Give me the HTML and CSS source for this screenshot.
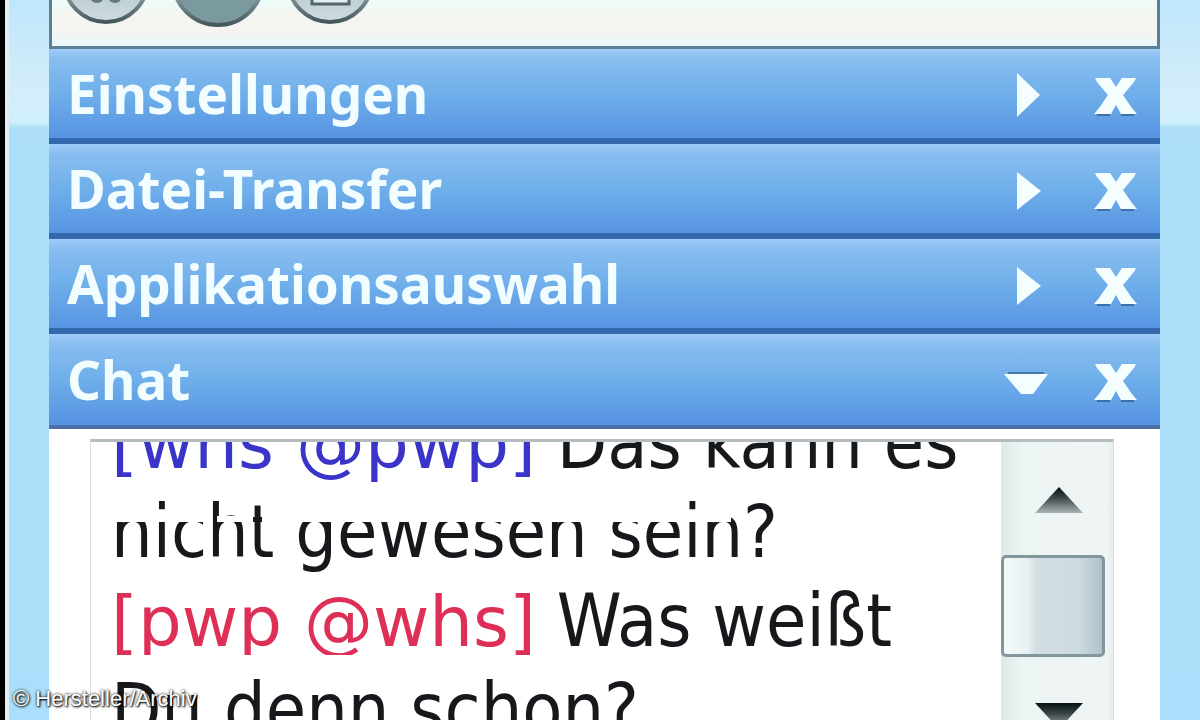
FILE: index.html
```
<!DOCTYPE html>
<html lang="de">
<head>
    <meta charset="UTF-8">
    <meta name="viewport" content="width=device-width, initial-scale=1.0">
    <title>Chat</title>
    <link rel="stylesheet" href="styles.css">
</head>
<body>
    <div class="window">
        <main class="panel">
            <div class="toolbar">
                <button class="tool" aria-label="Teilnehmer">
                    <svg width="96" height="28" viewBox="0 0 96 28">
                        <circle cx="48" cy="-20" r="42" fill="url(#light)" stroke="url(#ring)" stroke-width="4"/>
                        <path d="M34 0q5 4 10 0M52 0q5 4 10 0" fill="#66787e" stroke="#66787e" stroke-width="2"/>
                    </svg>
                </button>
                <button class="tool" aria-label="Aufnahme">
                    <svg width="100" height="28" viewBox="0 0 100 28">
                        <circle cx="50" cy="-20" r="45" fill="#7b9a9f" stroke="url(#ring)" stroke-width="4"/>
                    </svg>
                </button>
                <button class="tool" aria-label="Fenster">
                    <svg width="96" height="28" viewBox="0 0 96 28">
                        <circle cx="48" cy="-20" r="42" fill="url(#light)" stroke="url(#ring)" stroke-width="4"/>
                        <path d="M30-20V4H67V-20" fill="#e4eeee" stroke="#53666b" stroke-width="3"/>
                    </svg>
                </button>
            </div>

            <section class="bar">
                <h2>Einstellungen</h2>
                <button aria-label="Einstellungen öffnen"><svg width="48" height="48" viewBox="0 0 48 48"><path d="M15 3L38 25L15 47Z" fill="#f4feff"/></svg></button>
                <button aria-label="Einstellungen schließen"><svg width="48" height="48" viewBox="0 0 48 48"><use href="#close"/></svg></button>
            </section>
            <section class="bar">
                <h2>Datei-Transfer</h2>
                <button aria-label="Datei-Transfer öffnen"><svg width="48" height="48" viewBox="0 0 48 48"><use href="#right"/></svg></button>
                <button aria-label="Datei-Transfer schließen"><svg width="48" height="48" viewBox="0 0 48 48"><use href="#close"/></svg></button>
            </section>
            <section class="bar">
                <h2>Applikationsauswahl</h2>
                <button aria-label="Applikationsauswahl öffnen"><svg width="48" height="48" viewBox="0 0 48 48"><use href="#right"/></svg></button>
                <button aria-label="Applikationsauswahl schließen"><svg width="48" height="48" viewBox="0 0 48 48"><use href="#close"/></svg></button>
            </section>
            <section class="bar last">
                <h2>Chat</h2>
                <button aria-label="Chat zuklappen"><svg width="48" height="48" viewBox="0 0 48 48"><path d="M6 17H42" stroke="#4678b0" stroke-width="2"/><path d="M2 18H46L31 38H19Z" fill="#f4feff"/></svg></button>
                <button aria-label="Chat schließen"><svg width="48" height="48" viewBox="0 0 48 48"><use href="#close"/></svg></button>
            </section>

            <div class="chat">
                <div class="messages">
                    <p><span class="name blue">[whs @pwp]</span> Das kann es</p>
                    <p class="worn">nicht gewesen sein?</p>
                    <p class="cut"><span class="name red">[pwp @whs]</span> Was weißt</p>
                    <p>Du denn schon?</p>
                </div>
                <div class="scrollbar">
                    <button aria-label="Nach oben"><svg width="48" height="26" viewBox="0 0 48 26"><path d="M24 0L48 26H0Z" fill="url(#up)"/></svg></button>
                    <div class="thumb"></div>
                    <button aria-label="Nach unten"><svg width="48" height="26" viewBox="0 0 48 26"><path d="M0 0H48L24 26Z" fill="url(#up)"/></svg></button>
                </div>
            </div>
        </main>
    </div>
    <p class="credit">© Hersteller/Archiv</p>

    <svg class="defs" width="0" height="0">
        <defs>
            <linearGradient id="up" x1="0" y1="0" x2="0" y2="1">
                <stop offset="0" stop-color="#051012"/>
                <stop offset="0.4" stop-color="#384446"/>
                <stop offset="1" stop-color="#aab4b6"/>
            </linearGradient>
            <linearGradient id="ring" x1="0" y1="0" x2="0" y2="1">
                <stop offset="0.7" stop-color="#7f959a"/>
                <stop offset="1" stop-color="#45585d"/>
            </linearGradient>
            <linearGradient id="light" x1="0" y1="0" x2="0" y2="1">
                <stop offset="0.7" stop-color="#becfd3"/>
                <stop offset="1" stop-color="#cfdcdd"/>
            </linearGradient>
            <path id="right" d="M15 7L39 26L15 45Z" fill="#f4feff"/>
            <g id="close">
                <path d="M5 45H18M29 45H42" stroke="#3f70a8" stroke-width="2"/>
                <path d="M3 8H18L24 17L30 8H44L42 12L31 25L40 38L45 44H29L24 35L19 44H2L7 38L16 25L5 12Z" fill="#f4feff"/>
            </g>
        </defs>
    </svg>
</body>
</html>
```
FILE: styles.css
```
body {
    margin: 0;
    height: 100vh;
    overflow: hidden;
    background: #000;
    font-family: "DejaVu Sans Condensed", "DejaVu Sans", sans-serif;
}

h2, p {
    margin: 0;
    font-weight: normal;
}

button {
    padding: 0;
    border: 0;
    background: none;
    cursor: pointer;
}

svg {
    display: block;
}

.window {
    box-sizing: border-box;
    height: 100%;
    margin-left: 5px;
    padding: 0 40px;
    border-left: 4px solid #e4edf0;
    background: linear-gradient(#bfe6fc 0, #d3edfa 90px, #d0effa 122px, #addff8 128px, #a9dffa 100%);
}

.panel {
    display: flex;
    flex-direction: column;
    height: 100%;
    background: #fff;
}

.toolbar {
    display: flex;
    gap: 14px;
    height: 46px;
    padding-left: 6px;
    align-items: flex-start;
    border: 3px solid #5b7f93;
    border-top: 0;
    background: linear-gradient(#edfcf9 0, #f4f5f1 16px, #f5f4f0 32px, #e6f8fc 46px);
}

.bar {
    box-sizing: border-box;
    display: flex;
    align-items: center;
    gap: 42px;
    height: 95px;
    padding: 0 20px 0 18px;
    border-bottom: 6px solid #3468ac;
    background: linear-gradient(#a0ccf8 0, #88bdf0 10px, #6fafea 45px, #5793e2 90px);
}

.bar h2 {
    flex: 1;
    font-family: "Noto Sans", sans-serif;
    font-size: 53px;
    font-weight: 700;
    line-height: 60px;
    color: #f2fdff;
}

.last {
    border-bottom: 4px solid #4a70a6;
}

.chat {
    flex: 1;
    min-height: 0;
    display: flex;
    margin: 10px 46px 0 41px;
    border: 1px solid #dcdde2;
    border-top: 3px solid #b4bcc0;
    border-bottom: 0;
    overflow: hidden;
}

.messages {
    flex: 1;
    margin-top: -44px;
    padding-left: 20px;
    font-size: 73px;
    line-height: 89px;
    color: #16181c;
    white-space: nowrap;
}

.messages p {
    height: 89px;
}

.name {
    font-family: "DejaVu Sans", sans-serif;
    font-size: 69px;
}

.blue {
    color: #3a35c8;
}

.red {
    color: #de2f57;
}

/* faded row across the tops of the small letters, tall stems stay */
.worn {
    position: relative;
}

.worn::after {
    content: "";
    position: absolute;
    top: 29px;
    left: 0;
    width: 620px;
    height: 6px;
    background: linear-gradient(90deg, #fff 94px, transparent 94px, transparent 106px, #fff 106px, #fff 142px, transparent 142px, transparent 151px, #fff 151px);
}

.cut {
    clip-path: inset(0 0 10px 0);
}

.scrollbar {
    width: 104px;
    padding-right: 8px;
    display: flex;
    flex-direction: column;
    align-items: center;
    gap: 42px;
    padding-top: 45px;
    background: linear-gradient(90deg, #dde9e7, #edf4f4 20px, #eff4f4 106px, #e4eeec);
}

.scrollbar button {
    margin-left: 12px;
}

.thumb {
    box-sizing: border-box;
    flex: none;
    width: 104px;
    height: 102px;
    margin-bottom: 4px;
    border: 3px solid #82979b;
    border-radius: 5px;
    background: linear-gradient(90deg, #f3fafa 0, #e7eff1 24px, #d1dfe4 32px, #cddbe1 74px, #afc2ca 100%);
}

.credit {
    position: absolute;
    left: 13px;
    bottom: 9px;
    font-family: "Liberation Sans", Arial, sans-serif;
    font-size: 22px;
    line-height: 24px;
    color: #fff;
    text-shadow: 1px 1px 2px #000, 0 0 3px #000;
}

.defs {
    position: absolute;
}
```
